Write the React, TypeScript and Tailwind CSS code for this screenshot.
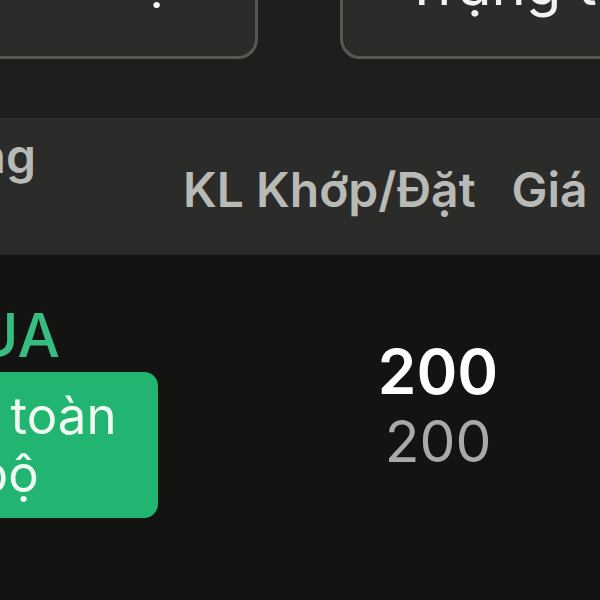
import React from "react";

export default function App() {
  return (
    <div
      className="w-[600px] h-[600px] overflow-hidden bg-[#131312] flex flex-col"
      style={{ fontFamily: "Inter, 'Noto Sans', sans-serif" }}
    >
      {/* top filter boxes */}
      <div className="h-[118px] shrink-0 bg-[#1e1f1d] overflow-hidden">
        <div className="flex gap-[82px] -mt-[62px] -ml-[40px]">
          <div className="w-[298px] h-[121px] shrink-0 rounded-[20px] border-[3px] border-[#535b50] bg-[#2b2c2a] flex items-end justify-end pr-[22px] pb-[50px]">
            <span className="text-[52px] leading-[52px] text-white whitespace-nowrap">Lệnh</span>
          </div>
          <div className="w-[400px] h-[121px] shrink-0 rounded-[20px] border-[3px] border-[#535b50] bg-[#2b2c2a] flex items-end pl-[60px] pb-[43px]">
            <span className="text-[58px] leading-[58px] text-[#f2f2f2] whitespace-nowrap">Trạng thái</span>
          </div>
        </div>
      </div>

      {/* table header */}
      <div className="h-[137px] shrink-0 bg-[#2b2c2a] border-b-2 border-[#262824] flex items-start text-[#b8bab6] font-semibold">
        <div className="w-[36px] shrink-0 flex justify-end pt-[12px]">
          <span className="text-[48px] leading-[52px] whitespace-nowrap">Hướng</span>
        </div>
        <div className="ml-[147px] pt-[46px] flex gap-[36px]">
          <span className="text-[48px] leading-[52px] whitespace-nowrap">KL Khớp/Đặt</span>
          <span className="text-[48px] leading-[52px] whitespace-nowrap">Giá Khớp/Đặt</span>
        </div>
      </div>

      {/* order row */}
      <div className="flex-1 flex items-start">
        <div className="w-[158px] shrink-0 flex flex-col items-end">
          <div className="w-[158px] flex pt-[50px]">
            <div className="w-[60px] flex justify-end">
              <span className="text-[60px] leading-[60px] font-medium text-[#37bd80] whitespace-nowrap">MUA</span>
            </div>
          </div>
          <div className="mt-[7px] w-[300px] h-[146px] shrink-0 rounded-[14px] bg-[#22b572] flex items-center justify-center text-center">
            <span className="text-[51px] leading-[58px] text-[#eefaf2]">
              Hủy toàn
              <br />
              bộ
            </span>
          </div>
        </div>
        <div className="ml-[218px] w-[124px] shrink-0 flex flex-col items-center pt-[82px]">
          <span className="text-[62px] leading-[70px] font-semibold text-white">200</span>
          <span className="text-[57px] leading-[70px] text-[#a9aaa7]">200</span>
        </div>
      </div>
    </div>
  );
}
